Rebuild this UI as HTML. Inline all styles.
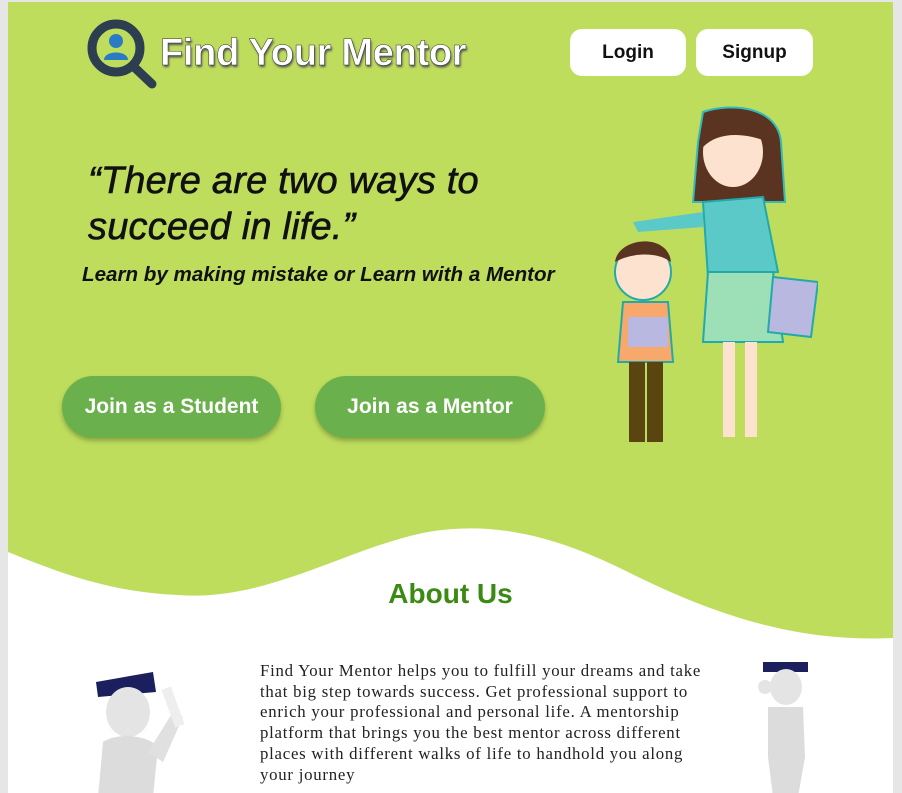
<!DOCTYPE html>
<html><head><meta charset="utf-8"><style>
*{margin:0;padding:0;box-sizing:border-box}
body{width:902px;height:793px;background:#e6e6e6;position:relative;overflow:hidden;font-family:"Liberation Sans",sans-serif}
#page{position:absolute;left:8px;top:2px;width:885px;height:791px;background:#fff;overflow:hidden}
#green{position:absolute;left:0;top:0;width:885px;height:660px}
.logo{position:absolute;left:152px;top:30px;font-size:38px;font-weight:bold;color:#fff;text-shadow:1px 2px 2px #555;-webkit-text-stroke:0.5px #333;letter-spacing:-0.3px}
.btn{position:absolute;top:27px;height:47px;background:#fff;border-radius:12px;font-size:19px;font-weight:bold;color:#111;text-align:center;line-height:47px}
h1{position:absolute;left:80px;top:156px;font-size:38px;font-style:italic;font-weight:normal;line-height:46px;color:#111;-webkit-text-stroke:0.6px #111;letter-spacing:0.2px}
.sub{position:absolute;left:74px;top:261px;font-size:20.6px;font-style:italic;font-weight:bold;color:#111}
.join{position:absolute;top:374px;height:62px;background:#6ab04c;border-radius:31px;color:#fff;font-size:21px;font-weight:bold;text-align:center;line-height:62px;box-shadow:0 3px 5px rgba(0,0,0,.25)}
.about{position:absolute;left:0;width:885px;top:576px;text-align:center;font-size:28px;font-weight:bold;color:#3a8a14}
.txt{position:absolute;left:252px;top:659px;width:470px;font-family:"Liberation Serif",serif;font-size:16.8px;line-height:20.7px;color:#222;white-space:nowrap;letter-spacing:0.75px}
</style></head><body>
<div id="page">
<svg id="green" viewBox="0 0 885 660"><path d="M0 0H885V636C800 640 720 620 620 570C540 530 480 520 420 530C340 545 260 600 170 593C100 590 50 570 0 550Z" fill="#bedd5c"/></svg>
<svg style="position:absolute;left:78px;top:16px" width="76" height="72" viewBox="0 0 76 72">
<circle cx="30" cy="30" r="24" fill="none" stroke="#2c3e50" stroke-width="9"/>
<line x1="47" y1="48" x2="66" y2="66" stroke="#2c3e50" stroke-width="9" stroke-linecap="round"/>
<circle cx="30" cy="23" r="7" fill="#2a7bc4"/><path d="M18 42C18 32 42 32 42 42Z" fill="#2a7bc4"/></svg>
<div class="logo">Find Your Mentor</div>
<div class="btn" style="left:562px;width:116px">Login</div>
<div class="btn" style="left:688px;width:117px">Signup</div>
<h1>“There are two ways to<br>succeed in life.”</h1>
<div class="sub">Learn by making mistake or Learn with a Mentor</div>
<div class="join" style="left:54px;width:219px">Join as a Student</div>
<div class="join" style="left:307px;width:230px">Join as a Mentor</div>
<svg style="position:absolute;left:595px;top:100px" width="215" height="345" viewBox="0 0 215 345">
<path d="M100 10C130 0 175 5 178 40L182 100 90 100 95 40Z" fill="#5a3420" stroke="#3bb" stroke-width="2"/>
<ellipse cx="130" cy="50" rx="30" ry="35" fill="#fde3cf"/>
<path d="M100 20C120 5 160 10 165 40C140 30 115 30 100 45Z" fill="#5a3420"/>
<path d="M100 100L160 95 175 170 105 175Z" fill="#5cc9c9" stroke="#2aa" stroke-width="2"/>
<path d="M105 170H170L180 240 100 240Z" fill="#9de0b8" stroke="#2aa" stroke-width="2"/>
<path d="M30 120L100 110 100 125 35 130Z" fill="#5cc9c9"/>
<rect x="120" y="240" width="12" height="95" fill="#fde3cf"/><rect x="142" y="240" width="12" height="95" fill="#fde3cf"/>
<path d="M170 175L215 180 208 235 165 230Z" fill="#b8b8e0" stroke="#2aa" stroke-width="2"/>
<circle cx="40" cy="170" r="28" fill="#fde3cf" stroke="#2aa" stroke-width="2"/>
<path d="M12 160C15 135 65 130 68 160C55 150 30 150 12 160Z" fill="#5a3420"/>
<path d="M20 200H65L70 260 15 260Z" fill="#f7a86a" stroke="#2aa" stroke-width="2"/>
<rect x="25" y="215" width="40" height="30" fill="#b8b8e0"/>
<rect x="26" y="260" width="16" height="80" fill="#5a4410"/><rect x="44" y="260" width="16" height="80" fill="#5a4410"/>
</svg>
<div class="about">About Us</div>
<div class="txt">Find Your Mentor helps you to fulfill your dreams and take<br>that big step towards success. Get professional support to<br>enrich your professional and personal life. A mentorship<br>platform that brings you the best mentor across different<br>places with different walks of life to handhold you along<br>your journey</div>
<svg style="position:absolute;left:80px;top:665px" width="120" height="130" viewBox="0 0 120 130">
<path d="M8 15L65 5 68 25 10 30Z" fill="#1b1f5e"/>
<ellipse cx="40" cy="45" rx="22" ry="25" fill="#e4e4e4"/>
<path d="M15 75C30 65 60 68 70 80L65 130H10Z" fill="#dcdcdc"/>
<path d="M60 85L85 45 95 50 75 95Z" fill="#e0e0e0"/>
<rect x="80" y="20" width="10" height="40" transform="rotate(-20 85 40)" fill="#eee"/>
</svg>
<svg style="position:absolute;left:745px;top:655px" width="70" height="140" viewBox="0 0 70 140">
<path d="M10 5H55V15H10Z" fill="#1b1f5e"/>
<ellipse cx="33" cy="30" rx="16" ry="18" fill="#e4e4e4"/>
<path d="M15 50H50L52 100 45 140H20L15 100Z" fill="#dcdcdc"/>
<circle cx="12" cy="30" r="7" fill="#e4e4e4"/>
</svg>
</div>
</body></html>
